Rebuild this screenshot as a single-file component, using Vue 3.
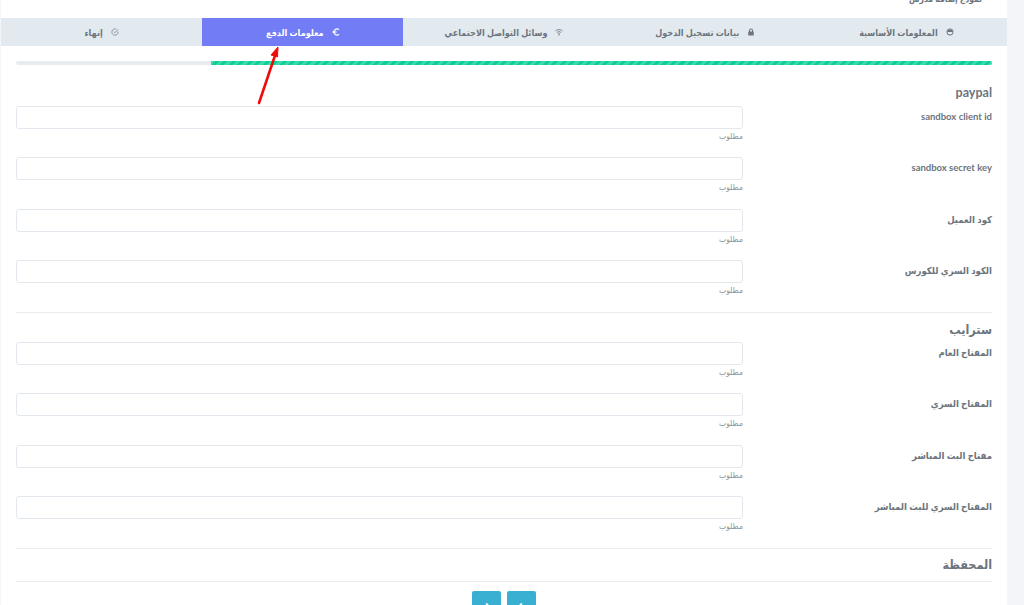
<script setup>
const tabs = [
  { title: 'المعلومات الأساسية', icon: 'globe' },
  { title: 'بيانات تسجيل الدخول', icon: 'lock' },
  { title: 'وسائل التواصل الاجتماعي', icon: 'wifi' },
  { title: 'معلومات الدفع', icon: 'euro', active: true },
  { title: 'إنهاء', icon: 'check' },
]

const paypalFields = ['sandbox client id', 'sandbox secret key', 'كود العميل', 'الكود السري للكورس']
const stripeFields = ['المفتاح العام', 'المفتاح السري', 'مفتاح البث المباشر', 'المفتاح السري للبث المباشر']
</script>

<template>
  <div class="page" dir="rtl">
    <main class="card">
      <div class="card-title"><span>نموذج إضافة مدرس</span></div>

      <nav class="tabs">
        <a v-for="tab in tabs" :key="tab.title" class="tab" :class="{ active: tab.active }">
          <svg class="tab-icon" viewBox="0 0 16 16">
            <template v-if="tab.icon === 'globe'">
              <circle cx="8" cy="8" r="6.200" fill="none" stroke="currentColor" stroke-width="2" />
              <path d="M2.500 8a5.600 5.600 0 0 1 11 0z" fill="currentColor" />
            </template>
            <path v-else-if="tab.icon === 'lock'" fill="currentColor" d="M2.500 7H4V5a4 4 0 0 1 8 0v2h1.500v8h-11zM6 7h4V5a2 2 0 0 0-4 0z" />
            <g v-else-if="tab.icon === 'wifi'" fill="none" stroke="currentColor" stroke-width="1.600">
              <path d="M.8 6a10.500 10.500 0 0 1 14.400 0" />
              <path d="M3.600 9a6.500 6.500 0 0 1 8.800 0" />
              <path d="M6 11.700a3 3 0 0 1 4 0" />
              <circle cx="8" cy="14" r=".6" />
            </g>
            <g v-else-if="tab.icon === 'euro'" fill="none" stroke="currentColor" stroke-width="2.200">
              <path d="M14 3.500A6 6 0 1 0 14 12.500" />
              <path d="M1 6.600h8M1 9.400h8" stroke-width="1.600" />
            </g>
            <g v-else fill="none" stroke="currentColor" stroke-width="1.400">
              <path d="M14.300 7.400v.7A6.300 6.300 0 1 1 10.600 2.300" />
              <path d="M14.500 2.800 8 9.400 5.700 7.200" />
            </g>
          </svg>
          <span>{{ tab.title }}</span>
        </a>
      </nav>

      <div class="progress"><div class="progress-fill"></div></div>

      <h4 class="section-title first">paypal</h4>
      <div v-for="field in paypalFields" :key="field" class="field">
        <label>{{ field }}</label>
        <div>
          <input type="text" />
          <small>مطلوب</small>
        </div>
      </div>

      <hr class="divider" />

      <h4 class="section-title stripe">سترايب</h4>
      <div v-for="field in stripeFields" :key="field" class="field">
        <label>{{ field }}</label>
        <div>
          <input type="text" />
          <small>مطلوب</small>
        </div>
      </div>

      <hr class="divider" />
      <h4 class="section-title wallet">المحفظة</h4>
      <hr class="divider" />

      <div class="actions">
        <button type="button">
          <svg viewBox="0 0 12 12"><path d="M11 6H3M6.500 2 2.500 6l4 4" fill="none" stroke="#fff" stroke-width="2.400" /></svg>
        </button>
        <button type="button">
          <svg viewBox="0 0 12 12"><path d="M1 6h8M5.500 2 9.500 6l-4 4" fill="none" stroke="#fff" stroke-width="2.400" /></svg>
        </button>
      </div>
    </main>

    <!-- Red annotation arrow drawn over the screenshot -->
    <svg class="arrow" viewBox="0 0 40 70">
      <path d="M6 63 21.500 17" stroke="#f00b0b" stroke-width="2.600" fill="none" stroke-linecap="round" />
      <path d="M25 7 18 15 24.500 17z" fill="#f00b0b" stroke="#f00b0b" />
    </svg>
  </div>
</template>

<style>
html, body {
  margin: 0;
  background: #f3f5f9;
}
</style>

<style scoped>
.page {
  position: relative;
  width: 1024px;
  height: 605px;
  overflow: hidden;
  background: #f3f5f9;
  font-family: Lato, 'DejaVu Sans Condensed', 'DejaVu Sans', sans-serif;
  color: #6c757d;
}
.card {
  width: 1006px;
  margin-right: 17px;
  height: 605px;
  background: #fff;
}
.card-title {
  height: 18px;
  padding-right: 25px;
  overflow: hidden;
  display: flex;
  align-items: flex-end;
  font-size: 8.500px;
  font-weight: 700;
  line-height: 12px;
}
.card-title span {
  margin-bottom: 13px;
}
.tabs {
  display: grid;
  grid-template-columns: repeat(5, 1fr);
  height: 28px;
  background: #e3eaef;
}
.tab {
  display: flex;
  align-items: center;
  justify-content: center;
  gap: 8px;
  font-size: 9px;
  font-weight: 700;
  color: #6c757d;
}
.tab.active {
  background: #727cf5;
  color: #fff;
}
.tab-icon {
  width: 8px;
  height: 8px;
}
.progress {
  height: 4px;
  margin: 15px 15px 0;
  background: #e9ecef;
  border-radius: 2px;
  overflow: hidden;
}
.progress-fill {
  width: 80%;
  height: 100%;
  background-color: #0acf97;
  background-image: repeating-linear-gradient(135deg, rgba(255, 255, 255, .2) 0 3px, transparent 3px 6px);
}
.section-title {
  margin: 0 15px;
  font-size: 12.500px;
  font-weight: 700;
  line-height: 16px;
  color: #6c757d;
}
.section-title.first {
  margin-top: 20px;
  margin-bottom: 4.800px;
}
.section-title.stripe {
  margin-top: 9px;
  margin-bottom: 4px;
}
.section-title.wallet {
  margin-top: 8px;
  margin-bottom: 8px;
}
.field {
  display: grid;
  grid-template-columns: 1fr 727px;
  height: 51.500px;
  margin: 0 15px;
}
.field label {
  font-size: 9.500px;
  font-weight: 700;
  line-height: 22px;
}
.field input {
  display: block;
  width: 100%;
  height: 23px;
  box-sizing: border-box;
  background: #fff;
  border: 1px solid #e3e7ee;
  border-radius: 3px;
}
.field small {
  display: block;
  margin-top: 2px;
  font-size: 8.500px;
  line-height: 10px;
  color: #8a969c;
}
.divider {
  margin: 0 15px;
  border: 0;
  border-top: 1px solid #e9ecef;
}
.actions {
  display: flex;
  justify-content: center;
  gap: 6px;
  margin-top: 9.500px;
}
.actions button {
  width: 29px;
  height: 30px;
  padding: 0;
  border: 0;
  border-radius: 2px;
  background: #39afd1;
}
.actions svg {
  display: block;
  width: 9px;
  height: 9px;
  margin: 0 auto;
}
.arrow {
  position: absolute;
  left: 253px;
  top: 40px;
  width: 40px;
  height: 70px;
}
</style>
